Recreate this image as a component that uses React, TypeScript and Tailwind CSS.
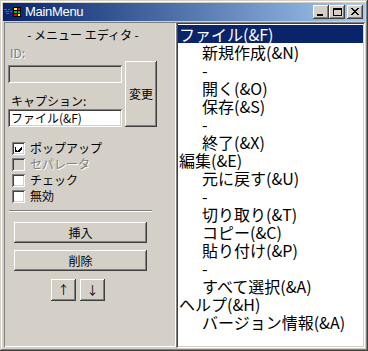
import React from 'react';

const raised =
  'shadow-[inset_-1px_-1px_#404040,inset_1px_1px_#ffffff,inset_-2px_-2px_#808080,inset_2px_2px_#d4d0c8]';
const sunken =
  'shadow-[inset_1px_1px_#808080,inset_-1px_-1px_#ffffff,inset_2px_2px_#404040,inset_-2px_-2px_#d4d0c8]';

interface MenuItem {
  text: string;
  level: number;
  selected?: boolean;
}

const items: MenuItem[] = [
  { text: 'ファイル(&F)', level: 0, selected: true },
  { text: '新規作成(&N)', level: 1 },
  { text: '-', level: 1 },
  { text: '開く(&O)', level: 1 },
  { text: '保存(&S)', level: 1 },
  { text: '-', level: 1 },
  { text: '終了(&X)', level: 1 },
  { text: '編集(&E)', level: 0 },
  { text: '元に戻す(&U)', level: 1 },
  { text: '-', level: 1 },
  { text: '切り取り(&T)', level: 1 },
  { text: 'コピー(&C)', level: 1 },
  { text: '貼り付け(&P)', level: 1 },
  { text: '-', level: 1 },
  { text: 'すべて選択(&A)', level: 1 },
  { text: 'ヘルプ(&H)', level: 0 },
  { text: 'バージョン情報(&A)', level: 1 },
];

const Check: React.FC<{ label: string; checked?: boolean; disabled?: boolean }> = ({ label, checked, disabled }) => (
  <div className="flex items-center h-[16px]">
    <div className={`w-[13px] h-[13px] flex items-center justify-center ${sunken} ${disabled ? 'bg-[#d4d0c8]' : 'bg-white'}`}>
      {checked && (
        <svg width="7" height="7" viewBox="0 0 7 7" shapeRendering="crispEdges">
          <path d="M0 2h1v3h1v1h1v-1h1v-1h1v-1h1v-1h1v3h-1v1h-1v1h-1v1h-1v1h-1v-1h-1v-1h-1z" fill="#000" />
        </svg>
      )}
    </div>
    <span className={`ml-[5px] text-[12px] leading-[14px] ${disabled ? 'text-[#808080] [text-shadow:1px_1px_#ffffff]' : 'text-black'}`}>
      {label}
    </span>
  </div>
);

const Button: React.FC<{ children: React.ReactNode; className?: string }> = ({ children, className }) => (
  <div className={`flex items-center justify-center bg-[#d4d0c8] text-[12px] text-black ${raised} ${className ?? ''}`}>
    {children}
  </div>
);

const App: React.FC = () => {
  return (
    <div className="w-[368px] h-[351px] bg-[#d4d0c8] p-[3px] flex flex-col font-['Noto_Sans_CJK_JP',sans-serif] shadow-[inset_-1px_-1px_#404040,inset_1px_1px_#d4d0c8,inset_-2px_-2px_#808080,inset_2px_2px_#ffffff]">
      {/* title bar */}
      <div className="h-[18px] flex items-center bg-gradient-to-r from-[#0a246a] to-[#a6caf0]">
        <svg width="18" height="12" viewBox="0 0 18 12" className="ml-[1px]" shapeRendering="crispEdges">
          <path d="M0 3h3v1h-3zM4 3h2v1h-2zM1 5h4v1h-4zM2 7h3v1h-3zM6 5h2v1h-2z" fill="#c03080" />
          <rect x="9" y="1" width="8" height="10" fill="#000" />
          <rect x="10" y="2" width="3" height="2" fill="#ffff00" />
          <rect x="14" y="2" width="2" height="2" fill="#ff0000" />
          <rect x="10" y="5" width="3" height="2" fill="#00c000" />
          <rect x="14" y="5" width="2" height="2" fill="#00c000" />
          <rect x="10" y="8" width="3" height="2" fill="#ff0000" />
          <rect x="14" y="8" width="2" height="2" fill="#ffff00" />
        </svg>
        <span className="ml-[3px] text-white text-[13px] leading-[18px] font-['Liberation_Sans',sans-serif] tracking-[-0.3px]">
          MainMenu
        </span>
        <div className="ml-auto mr-[2px] flex items-center">
          <div className={`w-[16px] h-[14px] bg-[#d4d0c8] flex items-end justify-center pb-[3px] ${raised}`}>
            <div className="w-[6px] h-[2px] bg-black -ml-[2px]" />
          </div>
          <div className={`w-[16px] h-[14px] bg-[#d4d0c8] flex items-center justify-center ${raised}`}>
            <div className="w-[9px] h-[8px] border border-black border-t-2 -mt-[1px]" />
          </div>
          <div className={`ml-[2px] w-[16px] h-[14px] bg-[#d4d0c8] flex items-center justify-center ${raised}`}>
            <svg width="8" height="7" viewBox="0 0 8 7" shapeRendering="crispEdges" className="-mt-[1px]">
              <path d="M0 0h2v1h1v1h2v-1h1v-1h2v1h-1v1h-1v1h-1v1h1v1h1v1h1v1h-2v-1h-1v-1h-2v1h-1v1h-2v-1h1v-1h1v-1h1v-1h-1v-1h-1v-1h-1z" fill="#000" />
            </svg>
          </div>
        </div>
      </div>

      {/* client */}
      <div className="flex flex-1 mt-[1px]">
        {/* left editor panel */}
        <div className="ml-[1px] w-[172px] mb-[1px] shadow-[inset_1px_1px_#808080,inset_-1px_-1px_#ffffff] pl-[4px] pt-[6px]">
          <div className="w-[150px] text-center text-[12px] leading-[14px] text-black">- メニュー エディタ -</div>
          <div className="mt-[5px] ml-[2px] text-[12px] leading-[12px] text-[#808080] [text-shadow:1px_1px_#ffffff]">ID:</div>
          <div className="flex mt-[2px]">
            <div className="w-[114px]">
              <div className={`mt-[4px] h-[18px] bg-[#d4d0c8] ${sunken}`} />
              <div className="mt-[11px] ml-[3px] text-[12px] leading-[14px] text-black">キャプション:</div>
              <div className={`mt-[1px] h-[18px] bg-white ${sunken} text-[12px] leading-[18px] pl-[3px] text-black`}>
                ファイル(&amp;F)
              </div>
            </div>
            <Button className="ml-[3px] w-[32px] h-[66px]">変更</Button>
          </div>

          <div className="mt-[13px] ml-[4px] flex flex-col">
            <Check label="ポップアップ" checked />
            <Check label="セパレータ" disabled />
            <Check label="チェック" />
            <Check label="無効" />
          </div>

          <div className="mt-[6px] ml-[1px] w-[143px] h-[2px] border-t border-t-[#808080] border-b border-b-white" />

          <Button className="mt-[10px] ml-[6px] w-[133px] h-[21px]">挿入</Button>
          <Button className="mt-[7px] ml-[6px] w-[133px] h-[21px]">削除</Button>
          <div className="mt-[8px] ml-[43px] flex gap-[4px]">
            <Button className="w-[25px] h-[22px] text-[12px]">↑</Button>
            <Button className="w-[25px] h-[22px] text-[12px]">↓</Button>
          </div>
        </div>

        {/* menu tree list */}
        <div className={`flex-1 bg-white p-[2px] ${sunken}`}>
          <div className="pt-[1px]">
            {items.map((item, i) => (
              <div
                key={i}
                className={`h-[18px] text-[16px] leading-[18px] whitespace-nowrap ${
                  item.level === 1 ? 'pl-[24px]' : 'pl-[1px]'
                } ${item.selected ? 'bg-[#0a246a] text-white' : 'text-black'}`}
              >
                {item.text}
              </div>
            ))}
          </div>
        </div>
      </div>
    </div>
  );
};

export default App;
